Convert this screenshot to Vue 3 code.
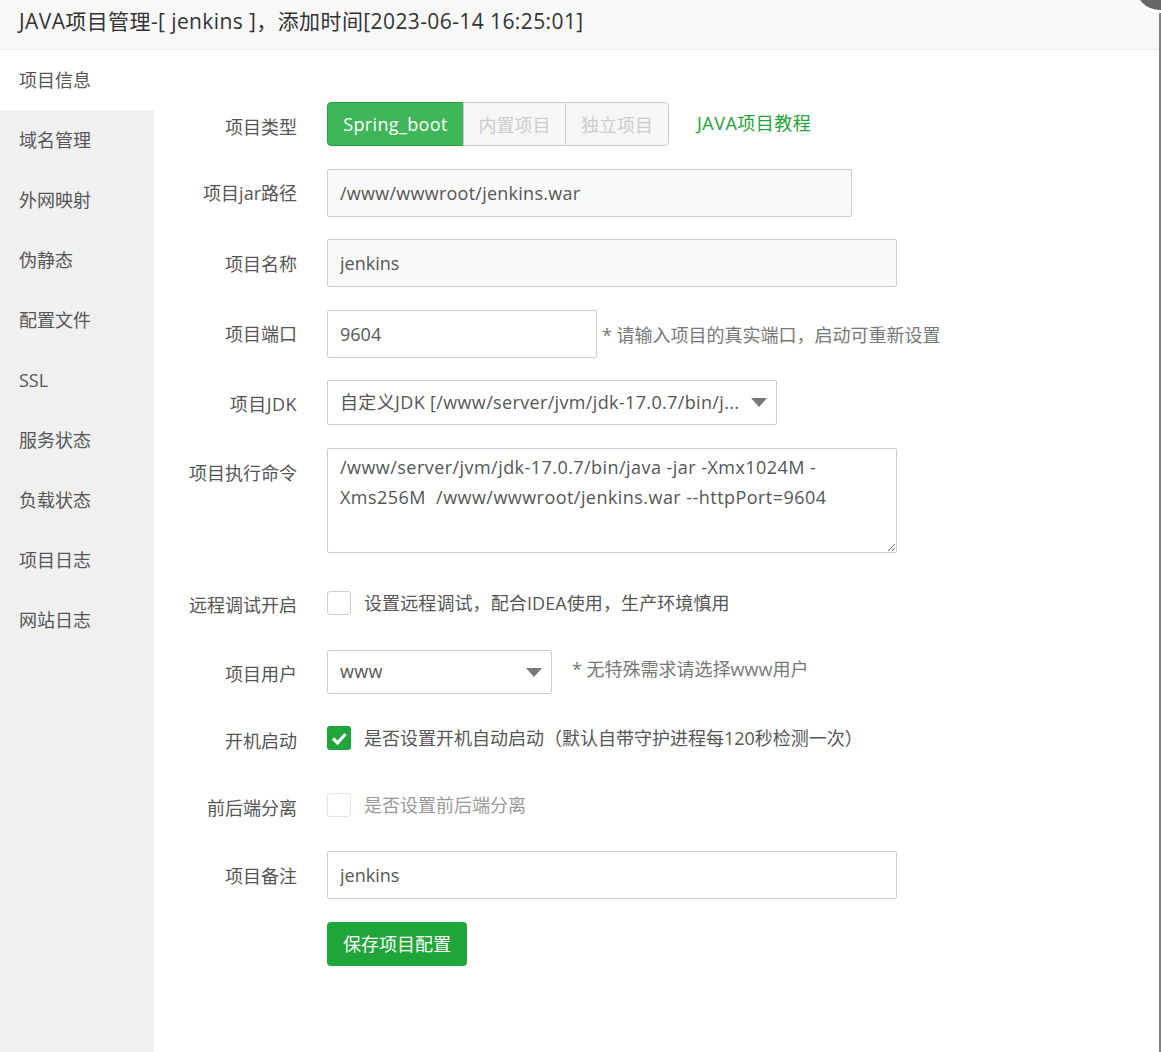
<template>
  <div class="layer">
    <div class="layer__title">JAVA项目管理-[ jenkins ]，添加时间[2023-06-14 16:25:01]</div>
    <span class="layer__scrollbar" />
    <span class="layer__close" />

    <div class="layer__body">
      <ul class="side-menu">
        <li
          v-for="(item, index) in menuItems"
          :key="item"
          class="side-menu__item"
          :class="{ 'side-menu__item--active': index === 0 }"
        >
          {{ item }}
        </li>
      </ul>

      <form class="project-form" @submit.prevent>
        <!-- Project type -->
        <div class="form-row form-row--type">
          <label class="form-row__label">项目类型</label>
          <div class="type-group">
            <span class="type-group__btn type-group__btn--active">Spring_boot</span>
            <span class="type-group__btn">内置项目</span>
            <span class="type-group__btn">独立项目</span>
          </div>
          <a class="tutorial-link">JAVA项目教程</a>
        </div>

        <div class="form-row form-row--jar">
          <label class="form-row__label">项目jar路径</label>
          <input class="text-input text-input--readonly text-input--jar" value="/www/wwwroot/jenkins.war" readonly />
        </div>

        <div class="form-row form-row--name">
          <label class="form-row__label">项目名称</label>
          <input class="text-input text-input--readonly text-input--wide" value="jenkins" readonly />
        </div>

        <div class="form-row form-row--port">
          <label class="form-row__label">项目端口</label>
          <input class="text-input text-input--port" value="9604" />
          <span class="form-row__hint form-row__hint--port">* 请输入项目的真实端口，启动可重新设置</span>
        </div>

        <div class="form-row form-row--jdk">
          <label class="form-row__label">项目JDK</label>
          <div class="select-box select-box--jdk">
            <span class="select-box__text">自定义JDK [/www/server/jvm/jdk-17.0.7/bin/j...</span>
            <i class="select-box__arrow" />
          </div>
        </div>

        <div class="form-row form-row--top form-row--cmd">
          <label class="form-row__label">项目执行命令</label>
          <textarea class="command-input" v-model="command" spellcheck="false" />
        </div>

        <div class="form-row form-row--remote">
          <label class="form-row__label">远程调试开启</label>
          <span class="check-box" />
          <span class="form-row__check-text form-row__check-text--remote">设置远程调试，配合IDEA使用，生产环境慎用</span>
        </div>

        <div class="form-row form-row--user">
          <label class="form-row__label">项目用户</label>
          <div class="select-box select-box--user">
            <span class="select-box__text">www</span>
            <i class="select-box__arrow" />
          </div>
          <span class="form-row__hint form-row__hint--user">* 无特殊需求请选择www用户</span>
        </div>

        <div class="form-row form-row--boot">
          <label class="form-row__label">开机启动</label>
          <span class="check-box check-box--checked">
            <svg viewBox="0 0 24 24" fill="none">
              <path d="M6 12.5L10.5 17L18.5 8" stroke="#ffffff" stroke-width="3.2" />
            </svg>
          </span>
          <span class="form-row__check-text">是否设置开机自动启动（默认自带守护进程每120秒检测一次）</span>
        </div>

        <div class="form-row form-row--split">
          <label class="form-row__label">前后端分离</label>
          <span class="check-box check-box--disabled" />
          <span class="form-row__check-text form-row__check-text--disabled">是否设置前后端分离</span>
        </div>

        <div class="form-row form-row--remark">
          <label class="form-row__label">项目备注</label>
          <input class="text-input text-input--wide" value="jenkins" />
        </div>

        <div class="form-row form-row--save">
          <span class="form-row__label" />
          <button class="save-btn" type="button">保存项目配置</button>
        </div>
      </form>
    </div>
  </div>
</template>

<script setup>
import { ref } from 'vue';

const menuItems = ['项目信息', '域名管理', '外网映射', '伪静态', '配置文件', 'SSL', '服务状态', '负载状态', '项目日志', '网站日志'];

const command = ref('/www/server/jvm/jdk-17.0.7/bin/java -jar -Xmx1024M -Xms256M  /www/wwwroot/jenkins.war --httpPort=9604');
</script>

<style>
html,
body {
  margin: 0;
  overflow: hidden;
  background: #ffffff;
}
</style>

<style scoped>
.layer {
  --text: #555555;
  --border: #cccccc;
  --green: #20a53a;
  --font: "Open Sans", "Noto Sans CJK SC", sans-serif;

  position: relative;
  display: flex;
  flex-direction: column;
  height: 1052px;
  font-family: var(--font);
  font-size: 18px;
  color: var(--text);
  overflow: hidden;
}

.layer__title {
  flex: none;
  height: 50px;
  padding: 0 0 10px 19px;
  box-sizing: border-box;
  display: flex;
  align-items: center;
  border-bottom: 1px solid #eeeeee;
  background: #f8f8f8;
  font-size: 21px;
  letter-spacing: 0.4px;
  color: #333333;
  white-space: nowrap;
}

.layer__scrollbar {
  position: absolute;
  top: 0;
  right: 0;
  bottom: 0;
  width: 2px;
  background: #808080;
}

/* Close button, cut off by the window corner */
.layer__close {
  position: absolute;
  top: -43px;
  right: -27px;
  width: 56px;
  height: 56px;
  box-sizing: border-box;
  border-radius: 50%;
  border: 3px solid #ffffff;
  background: #666666;
}

.layer__body {
  flex: 1;
  display: flex;
  min-height: 0;
}

.side-menu {
  flex: none;
  width: 154px;
  margin: 0;
  padding: 0;
  list-style: none;
  background: #f0f0f0;
}

.side-menu__item {
  height: 60px;
  padding-left: 19px;
  line-height: 60px;
  color: #555555;
}

.side-menu__item--active {
  background: #ffffff;
}

.project-form {
  flex: 1;
  padding-top: 52px;
}

.form-row {
  display: flex;
  align-items: center;
}

.form-row--top {
  align-items: flex-start;
}

.form-row--jar { margin-top: 23px; }
.form-row--name { margin-top: 22px; }
.form-row--port { margin-top: 23px; }
.form-row--jdk { margin-top: 22px; }
.form-row--cmd { margin-top: 23px; }
.form-row--remote { margin-top: 38px; }
.form-row--user { margin-top: 35px; }
.form-row--boot { margin-top: 32px; }
.form-row--split { margin-top: 43px; }
.form-row--remark { margin-top: 34px; }
.form-row--save { margin-top: 23px; }

/* Fixed height, so the padding only moves the text and not the row */
.form-row__label {
  flex: none;
  width: 143px;
  height: 24px;
  box-sizing: border-box;
  margin-right: 30px;
  line-height: 24px;
  text-align: right;
  white-space: nowrap;
}

.form-row--type .form-row__label { padding-top: 3px; }
.form-row--name .form-row__label { padding-top: 1px; }
.form-row--remote .form-row__label { padding-top: 2px; }
.form-row--user .form-row__label { padding-top: 2px; }
.form-row--boot .form-row__label { padding-top: 3px; }
.form-row--split .form-row__label { padding-top: 3px; }
.form-row--remark .form-row__label { padding-top: 1px; }

.form-row--jdk .form-row__label {
  padding-top: 1px;
  letter-spacing: 0.45px;
}

.form-row--top .form-row__label {
  height: 37px;
  padding-top: 13px;
}

.type-group {
  display: flex;
  height: 44px;
  box-sizing: border-box;
}

.type-group__btn {
  display: flex;
  align-items: center;
  justify-content: center;
  width: 103px;
  box-sizing: border-box;
  margin-left: -1px;
  border: 1px solid var(--border);
  background: #f6f6f6;
  color: #cccccc;
}

.type-group__btn:first-child {
  width: 137px;
  margin-left: 0;
  border-color: var(--green);
  border-radius: 4px 0 0 4px;
  background: #3fb65a;
  letter-spacing: 0.36px;
  color: #ffffff;
}

.type-group__btn:last-child {
  width: 104px;
  border-radius: 0 4px 4px 0;
}

.tutorial-link {
  margin-left: 28px;
  margin-top: -5px;
  letter-spacing: 0.5px;
  color: var(--green);
}

.text-input,
.select-box,
.command-input {
  display: block;
  box-sizing: border-box;
  padding: 0 12px;
  border: 1px solid var(--border);
  border-radius: 2px;
  outline: none;
  background: #ffffff;
  font-family: var(--font);
  font-size: 18px;
  color: var(--text);
}

.text-input {
  height: 48px;
}

.text-input--readonly {
  background: #f9f9f9;
}

.text-input--jar {
  width: 525px;
  letter-spacing: 0.25px;
}

.text-input--wide { width: 570px; }
.text-input--port { width: 270px; }

.form-row__hint {
  color: #777777;
  white-space: nowrap;
}

.form-row__hint--port {
  margin-left: 5px;
}

.form-row__hint--user {
  margin-left: 20px;
  margin-top: -8px;
}

.select-box {
  position: relative;
  height: 45px;
  display: flex;
  align-items: center;
  padding-bottom: 3px;
  letter-spacing: 0.35px;
}

.select-box--jdk { width: 450px; }
.select-box--user { width: 225px; height: 44px; }

.select-box__text {
  white-space: nowrap;
}

.select-box__arrow {
  position: absolute;
  right: 9px;
  top: 17px;
  border-style: solid;
  border-width: 9px 8.5px 0;
  border-color: #777777 transparent transparent;
}

.command-input {
  width: 570px;
  height: 105px;
  padding: 3px 12px;
  line-height: 30px;
  letter-spacing: 0.45px;
}

.check-box {
  flex: none;
  display: block;
  width: 24px;
  height: 24px;
  box-sizing: border-box;
  border: 1px solid var(--border);
  border-radius: 3px;
  background: #ffffff;
}

.check-box svg {
  display: block;
  width: 100%;
  height: 100%;
}

.check-box--checked {
  border: none;
  background: var(--green);
}

.check-box--disabled {
  border-color: #e4e4e4;
}

.form-row__check-text {
  margin-left: 13px;
  line-height: 24px;
  white-space: nowrap;
}

.form-row__check-text--remote {
  letter-spacing: 0.1px;
}

.form-row__check-text--disabled {
  color: #999999;
}

.save-btn {
  width: 140px;
  height: 44px;
  padding: 0 0 2px;
  border: none;
  border-radius: 4px;
  background: var(--green);
  font-family: var(--font);
  font-size: 18px;
  color: #ffffff;
}
</style>
